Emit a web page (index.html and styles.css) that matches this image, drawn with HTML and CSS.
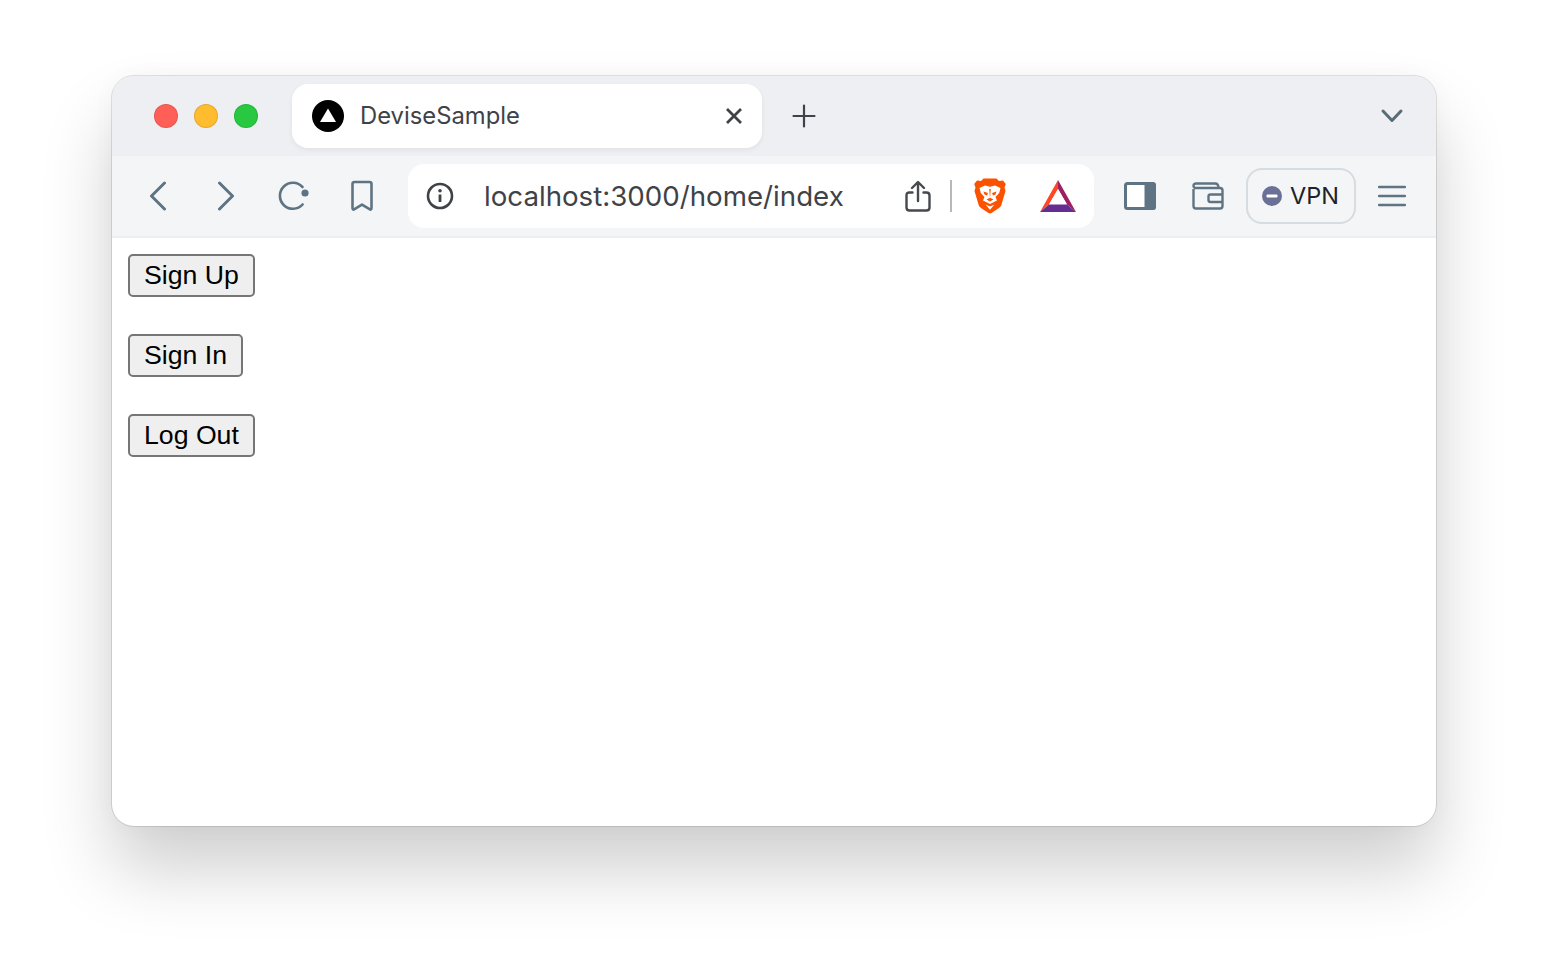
FILE: index.html
```html
<!DOCTYPE html>
<html>
  <head>
    <title>DeviseSample</title>
    <meta name="viewport" content="width=device-width, initial-scale=1" />
    <link rel="stylesheet" href="styles.css">
  </head>
  <body>
    <div class="window">
      <div class="tabbar">
        <div class="lights">
          <span class="light red"></span>
          <span class="light yellow"></span>
          <span class="light green"></span>
        </div>
        <div class="tab">
          <svg class="favicon" width="32" height="32" viewBox="0 0 32 32">
            <circle cx="16" cy="16" r="16" fill="#000" />
            <path d="M16 8.5 L24 22 H8 Z" fill="#fff" />
          </svg>
          <span class="tab-title">DeviseSample</span>
          <svg class="tab-close" width="18" height="18" viewBox="0 0 18 18">
            <path d="M2 2 L16 16 M16 2 L2 16" stroke="#3f4348" stroke-width="2.8" fill="none" />
          </svg>
        </div>
        <svg class="new-tab" width="24" height="24" viewBox="0 0 24 24">
          <path d="M12 1.5 V22.5 M1.5 12 H22.5" stroke="#3f4348" stroke-width="2.2" stroke-linecap="round" fill="none" />
        </svg>
        <svg class="tab-list" width="24" height="16" viewBox="0 0 24 16">
          <path d="M3 3 L12 12.5 L21 3" stroke="#5a6b77" stroke-width="3" stroke-linecap="round" stroke-linejoin="round" fill="none" />
        </svg>
      </div>
      <div class="toolbar">
        <div class="nav">
          <span class="nav-btn">
            <svg width="20" height="30" viewBox="0 0 20 30"><path d="M16.5 2 L3.5 15 L16.5 28" class="ico" /></svg>
          </span>
          <span class="nav-btn">
            <svg width="20" height="30" viewBox="0 0 20 30"><path d="M3.5 2 L16.5 15 L3.5 28" class="ico" /></svg>
          </span>
          <span class="nav-btn">
            <svg width="32" height="32" viewBox="0 0 32 32">
              <path d="M24.6 24.5 A13 13 0 1 1 24.5 7" class="ico thin" />
              <circle cx="27" cy="13" r="3.6" fill="#5f7482" />
            </svg>
          </span>
          <span class="nav-btn">
            <svg width="24" height="32" viewBox="0 0 24 32">
              <path d="M2.5 4 Q2.5 2 4.5 2 H19.5 Q21.5 2 21.5 4 V28 Q21.5 30.4 19.5 29.2 L12 24.6 L4.5 29.2 Q2.5 30.4 2.5 28 Z" class="ico thin" />
            </svg>
          </span>
        </div>
        <div class="urlbar">
          <svg class="info" width="28" height="28" viewBox="0 0 28 28">
            <circle cx="14" cy="14" r="12" stroke="#3f4348" stroke-width="2.6" fill="none" />
            <circle cx="14" cy="8.8" r="1.8" fill="#3f4348" />
            <path d="M14 12.5 V20" stroke="#3f4348" stroke-width="2.8" fill="none" />
          </svg>
          <span class="url">localhost:3000/home/index</span>
          <svg class="share" width="26" height="32" viewBox="0 0 26 32">
            <path d="M7.5 12.5 H4.5 Q1.5 12.5 1.5 15.5 V27.5 Q1.5 30.5 4.5 30.5 H21.5 Q24.5 30.5 24.5 27.5 V15.5 Q24.5 12.5 21.5 12.5 H18.5 M13 21 V2.5 M7 8 L13 2 L19 8" stroke="#46494d" stroke-width="2.4" stroke-linecap="round" stroke-linejoin="round" fill="none" />
          </svg>
          <span class="divider"></span>
          <svg class="brave" width="32" height="36" viewBox="0 0 32 36">
            <path d="M16 0.5 L22.5 0.5 L25 3 L29 2.5 L31.8 6 L30.5 9.5 L31.5 13 L27.5 26.5 Q27 28.5 25 30 L17.5 35 Q16 35.8 14.5 35 L7 30 Q5 28.5 4.5 26.5 L0.5 13 L1.5 9.5 L0.2 6 L3 2.5 L7 3 L9.5 0.5 Z" fill="#fb5200" />
            <path d="M5.5 10 L11 7.5 L16 8.8 L21 7.5 L26.5 10 L25.2 15 L21.5 19 L23 22.5 L16 26 L9 22.5 L10.5 19 L6.8 15 Z" fill="#fff" />
            <path d="M9.5 13.5 L14 15 L13 17.5 L10.5 16.5 Z M22.5 13.5 L18 15 L19 17.5 L21.5 16.5 Z M15.2 11 L16 20 L16.8 11 Z M12.5 21.5 L16 19.8 L19.5 21.5 L16 23.4 Z" fill="#fb5200" />
            <path d="M11.5 26.5 L16 28.6 L20.5 26.5 L16 31.8 Z" fill="#fff" />
          </svg>
          <svg class="bat" width="36" height="32" viewBox="0 0 36 32">
            <path d="M18 0 L36 32 L27 24.5 L18 9 Z" fill="#9e1f63" />
            <path d="M18 0 L0 32 L9 24.5 L18 9 Z" fill="#ff4724" />
            <path d="M9 24.5 H27 L18 9 Z" fill="#fff" />
            <path d="M0 32 H36 L27 24.5 H9 Z" fill="#662d91" />
          </svg>
        </div>
        <div class="tools">
          <svg class="sidebar-ico" width="32" height="28" viewBox="0 0 32 28">
            <rect x="1.5" y="1.5" width="29" height="25" rx="2" stroke="#5f7482" stroke-width="3" fill="#fff" />
            <path d="M22 1.5 H28.5 Q30.5 1.5 30.5 3.5 V24.5 Q30.5 26.5 28.5 26.5 H22 Z" fill="#5f7482" stroke="#5f7482" stroke-width="3" />
          </svg>
          <svg class="wallet" width="32" height="28" viewBox="0 0 32 28">
            <path d="M1.5 7 V24 Q1.5 26.5 4 26.5 H28 Q30.5 26.5 30.5 24 V8.5 Q30.5 6 28 6 H4 Q1.5 6 1.5 3.8 Q1.5 1.5 4 1.5 H23 Q26.5 1.5 26.5 6 M30.5 12.5 H18.5 Q16.5 12.5 16.5 14.5 V18 Q16.5 20 18.5 20 H30.5" stroke="#5f7482" stroke-width="2.4" fill="none" />
          </svg>
          <div class="vpn">
            <svg width="20" height="20" viewBox="0 0 20 20">
              <circle cx="10" cy="10" r="10" fill="#6b7196" />
              <rect x="4.5" y="8.5" width="11" height="3" rx="1" fill="#fff" />
            </svg>
            <span class="vpn-label">VPN</span>
          </div>
          <svg class="menu" width="28" height="22" viewBox="0 0 28 22">
            <path d="M1 2 H27 M1 11 H27 M1 20 H27" stroke="#5f7482" stroke-width="2.4" stroke-linecap="round" fill="none" />
          </svg>
        </div>
      </div>
      <div class="content">
        <button class="btn">Sign Up</button>
        <button class="btn">Sign In</button>
        <button class="btn">Log Out</button>
      </div>
    </div>
  </body>
</html>
```

FILE: styles.css
```css
html {
  height: 100%;
  background-color: #fff;
}
body {
  margin: 0;
  min-height: 100%;
  box-sizing: border-box;
  padding: 76px 112px 0;
  overflow: hidden;
  background-color: #fff;
}
.window {
  width: 1324px;
  height: 750px;
  box-sizing: border-box;
  display: flex;
  flex-direction: column;
  overflow: hidden;
  border-radius: 22px;
  background-color: #fff;
  outline: 1px solid rgba(0, 0, 0, 0.11);
  box-shadow: 0 44px 70px rgba(0, 0, 0, 0.19), 0 0 24px rgba(0, 0, 0, 0.03);
}
/* Tab strip */
.tabbar {
  height: 80px;
  flex: none;
  display: flex;
  align-items: center;
  background-color: #edeff2;
}
.lights {
  display: flex;
  gap: 16px;
  margin-left: 42px;
}
.light {
  width: 24px;
  height: 24px;
  box-sizing: border-box;
  border-radius: 50%;
  border: 1px solid rgba(0, 0, 0, 0.1);
}
.red {
  background-color: #ff5f57;
}
.yellow {
  background-color: #febc2e;
}
.green {
  background-color: #28c840;
}
.tab {
  width: 470px;
  height: 64px;
  box-sizing: border-box;
  display: flex;
  align-items: center;
  margin-left: 34px;
  padding: 0 19px 0 20px;
  border-radius: 16px;
  background-color: #fff;
  box-shadow: 0 2px 5px rgba(0, 0, 0, 0.06);
}
.tab-title {
  margin: 0 0 2px 16px;
  font-family: Inter, sans-serif;
  font-size: 23.8px;
  color: #3f4348;
}
.tab-close {
  margin-left: auto;
}
.new-tab {
  margin-left: 30px;
}
.tab-list {
  margin-left: auto;
  margin-right: 32px;
}
/* Toolbar */
.toolbar {
  height: 82px;
  flex: none;
  box-sizing: border-box;
  display: flex;
  align-items: center;
  border-bottom: 2px solid #eceef0;
  background-color: #f3f5f7;
}
.nav {
  display: flex;
  gap: 20px;
  margin-left: 22px;
}
.nav-btn {
  width: 48px;
  height: 48px;
  display: flex;
  align-items: center;
  justify-content: center;
}
.ico {
  stroke: #5f7482;
  stroke-width: 3;
  stroke-linecap: round;
  stroke-linejoin: round;
  fill: none;
}
.ico.thin {
  stroke-width: 2.6;
}
.urlbar {
  width: 686px;
  height: 64px;
  box-sizing: border-box;
  display: flex;
  align-items: center;
  margin-left: 22px;
  padding-left: 18px;
  border-radius: 16px;
  background-color: #fff;
}
.url {
  margin-left: 30px;
  font-family: Inter, sans-serif;
  font-size: 27.7px;
  color: #3f4348;
}
.share {
  margin-left: auto;
}
.divider {
  width: 2px;
  height: 32px;
  margin-left: 19px;
  background-color: #b8b8b8;
}
.brave {
  margin-left: 22px;
}
.bat {
  margin-left: 34px;
  margin-right: 18px;
}
.tools {
  display: flex;
  align-items: center;
  margin-left: 30px;
}
.wallet {
  margin-left: 36px;
}
.vpn {
  width: 110px;
  height: 56px;
  box-sizing: border-box;
  display: flex;
  align-items: center;
  gap: 8px;
  margin-left: 22px;
  padding-left: 14px;
  border: 2px solid #d5dce2;
  border-radius: 16px;
}
.vpn-label {
  margin-bottom: 1px;
  font-family: Inter, sans-serif;
  font-size: 23.5px;
  color: #1f2228;
}
.menu {
  margin-left: 22px;
}
/* Page content */
.content {
  display: flex;
  flex-direction: column;
  align-items: flex-start;
  gap: 37px;
  padding: 16px;
}
.btn {
  height: 43px;
  box-sizing: border-box;
  padding: 0 14px;
  border: 2px solid #767676;
  border-radius: 5px;
  background-color: #efefef;
  font-family: "Liberation Sans", Arial, sans-serif;
  font-size: 26.67px;
  color: #000;
}
```
